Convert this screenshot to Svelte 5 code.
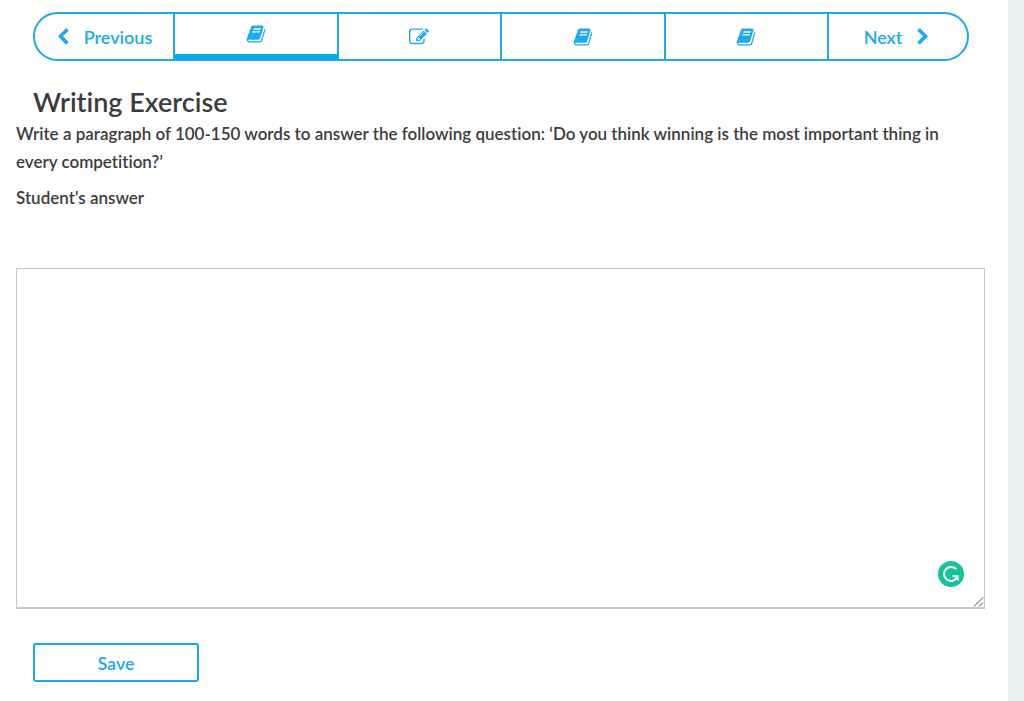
<script lang="ts">
  type Step = { id: number; icon: 'book' | 'pencil'; label: string };

  const steps: Step[] = [
    { id: 1, icon: 'book', label: 'Reading 1' },
    { id: 2, icon: 'pencil', label: 'Exercise' },
    { id: 3, icon: 'book', label: 'Reading 2' },
    { id: 4, icon: 'book', label: 'Reading 3' }
  ];

  const icons = {
    book: 'M1703 478q40 57 18 129l-275 906q-19 64-76.5 107.5t-122.5 43.5h-923q-77 0-148.5-53.5t-99.5-131.5q-24-67-2-127 0-4 3-27t4-37q1-8-3-21.5t-3-19.5q2-11 8-21t16.5-23.5 16.5-23.5q23-38 45-91.5t30-91.5q3-10 .5-30t-.5-28q3-11 17-28t17-23q21-36 42-92t25-90q1-9-2.5-32t.5-28q4-13 22-30.5t22-22.5q19-26 42.5-84.5t27.5-96.5q1-8-3-25.5t-2-26.5q2-8 9-18t18-23 17-21q8-12 16.5-30.5t15-35 16-36 19.5-32 26.5-23.5 36-11.5 47.5 5.5l-1 3q38-9 51-9h761q74 0 114 56t18 130l-274 906q-36 119-71.5 153.5t-128.5 34.5h-869q-27 0-38 15-11 16-1 43 24 70 144 70h923q29 0 56-15.5t35-41.5l300-987q7-22 5-57 38 15 59 43zm-1064 2q-4 13 2 22.5t20 9.5h608q13 0 25.5-9.5t16.5-22.5l21-64q4-13-2-22.5t-20-9.5h-608q-13 0-25.5 9.5t-16.5 22.5zm-83 256q-4 13 2 22.5t20 9.5h608q13 0 25.5-9.5t16.5-22.5l21-64q4-13-2-22.5t-20-9.5h-608q-13 0-25.5 9.5t-16.5 22.5z',
    pencil: 'M888 1184l116-116-152-152-116 116v56h96v96h56zm440-720q-16-16-33 1l-350 350q-17 17-1 33t33-1l350-350q17-17 1-33zm80 594v190q0 119-84.5 203.5t-203.5 84.5h-832q-119 0-203.5-84.5t-84.5-203.5v-832q0-119 84.5-203.5t203.5-84.5h832q63 0 117 25 15 7 18 23 3 17-9 29l-49 49q-14 14-32 8-23-6-45-6h-832q-66 0-113 47t-47 113v832q0 66 47 113t113 47h832q66 0 113-47t47-113v-126q0-13 9-22l64-64q15-15 35-7t20 29zm-96-738l288 288-672 672h-288v-288zm444 132l-92 92-288-288 92-92q28-28 68-28t68 28l152 152q28 28 28 68t-28 68z'
  };

  let current = $state(0);
  let answer = $state('');

  function previous() {
    if (current > 0) current -= 1;
  }

  function next() {
    if (current < steps.length - 1) current += 1;
  }

  function save(event: SubmitEvent) {
    event.preventDefault();
  }
</script>

<main class="page">
  <nav class="steps">
    <button class="step end" type="button" onclick={previous}>
      <svg width="18" height="18" viewBox="0 0 1792 1792" fill="currentColor" aria-hidden="true">
        <path d="M1427 301l-531 531 531 531q19 19 19 45t-19 45l-166 166q-19 19-45 19t-45-19l-742-742q-19-19-19-45t19-45l742-742q19-19 45-19t45 19l166 166q19 19 19 45t-19 45z" />
      </svg>
      Previous
    </button>
    {#each steps as step, i (step.id)}
      <button
        class="step"
        class:active={i === current}
        type="button"
        aria-label={step.label}
        onclick={() => (current = i)}
      >
        <svg width="20" height="20" viewBox="0 0 1792 1792" fill="currentColor" aria-hidden="true">
          <path d={icons[step.icon]} />
        </svg>
      </button>
    {/each}
    <button class="step end" type="button" onclick={next}>
      Next
      <svg width="18" height="18" viewBox="0 0 1792 1792" fill="currentColor" aria-hidden="true">
        <path d="M1363 877l-742 742q-19 19-45 19t-45-19l-166-166q-19-19-19-45t19-45l531-531-531-531q-19-19-19-45t19-45l166-166q19-19 45-19t45 19l742 742q19 19 19 45t-19 45z" />
      </svg>
    </button>
  </nav>

  <h1>Writing Exercise</h1>
  <p>
    Write a paragraph of 100-150 words to answer the following question: ‘Do you think winning is the most important thing in every competition?’
  </p>

  <form onsubmit={save}>
    <label for="answer">Student's answer</label>
    <div class="editor">
      <textarea id="answer" bind:value={answer}></textarea>
      <svg class="checker" viewBox="0 0 26 26" aria-hidden="true">
        <circle cx="13" cy="13" r="13" fill="#15c39a" />
        <path d="M18.2 8.2A7 7 0 1 0 18.4 17.4" fill="none" stroke="#fff" stroke-width="2" />
        <path d="M14.4 14.2H20.6V20.2L18.6 18.4L17 16.2H14.4Z" fill="#fff" />
      </svg>
      <svg class="grip" viewBox="0 0 10 10" aria-hidden="true">
        <path d="M0 9.5L9 .5M5 9.5L9 5.5" fill="none" stroke="#444" />
      </svg>
    </div>
    <button class="save" type="submit">Save</button>
  </form>
</main>

<style>
  :global(body) {
    margin: 0;
    background: #e9f0f4;
  }

  .page {
    box-sizing: border-box;
    min-height: 100vh;
    margin-right: 16px;
    padding: 12px 23px 20px 16px;
    background: #fff;
    color: #3c3c3c;
    font-family: Lato, sans-serif;
    font-size: 17px;
    font-weight: 600;
    font-variant-ligatures: none;
    line-height: 28px;
  }

  .steps {
    display: flex;
    height: 49px;
    margin: 0 16px 0 17px;
    box-sizing: border-box;
    border: 2px solid #1caae8;
    border-radius: 25px;
    overflow: hidden;
  }

  .step {
    flex: 1;
    display: flex;
    align-items: center;
    justify-content: center;
    padding: 0;
    border: 0;
    border-right: 2px solid #1caae8;
    background: none;
    color: #1caaf0;
    font: inherit;
    cursor: pointer;
  }

  .step.end {
    flex: 0 0 140px;
    box-sizing: border-box;
    gap: 12px;
    font-size: 18px;
  }

  .step.end:first-child { padding-right: 2px; }

  .step.end:last-child {
    flex-basis: 138px;
    border-right: 0;
  }

  .step.active { border-bottom: 5px solid #03a9f4; }

  h1 {
    margin: 25px 17px 2px;
    font-size: 27px;
    font-weight: 600;
    line-height: 32px;
  }

  p {
    margin: 0 0 8px;
    padding-right: 16px;
  }

  label { display: block; }

  .editor {
    position: relative;
    margin: 56px 0 34px;
  }

  textarea {
    display: block;
    box-sizing: border-box;
    width: 100%;
    height: 341px;
    padding: 8px;
    border: 1px solid #c8c8c8;
    border-bottom-width: 2px;
    outline: none;
    resize: none;
    color: inherit;
    font: inherit;
  }

  .checker {
    position: absolute;
    right: 21px;
    bottom: 22px;
    width: 26px;
    height: 26px;
  }

  .grip {
    position: absolute;
    right: 1px;
    bottom: 2px;
    width: 10px;
    height: 10px;
  }

  .save {
    display: block;
    box-sizing: border-box;
    width: 166px;
    height: 39px;
    margin-left: 17px;
    padding: 0;
    border: 2px solid #1caae8;
    border-radius: 3px;
    background: #fff;
    color: #1caaf0;
    font: inherit;
    font-size: 18px;
    cursor: pointer;
  }
</style>
